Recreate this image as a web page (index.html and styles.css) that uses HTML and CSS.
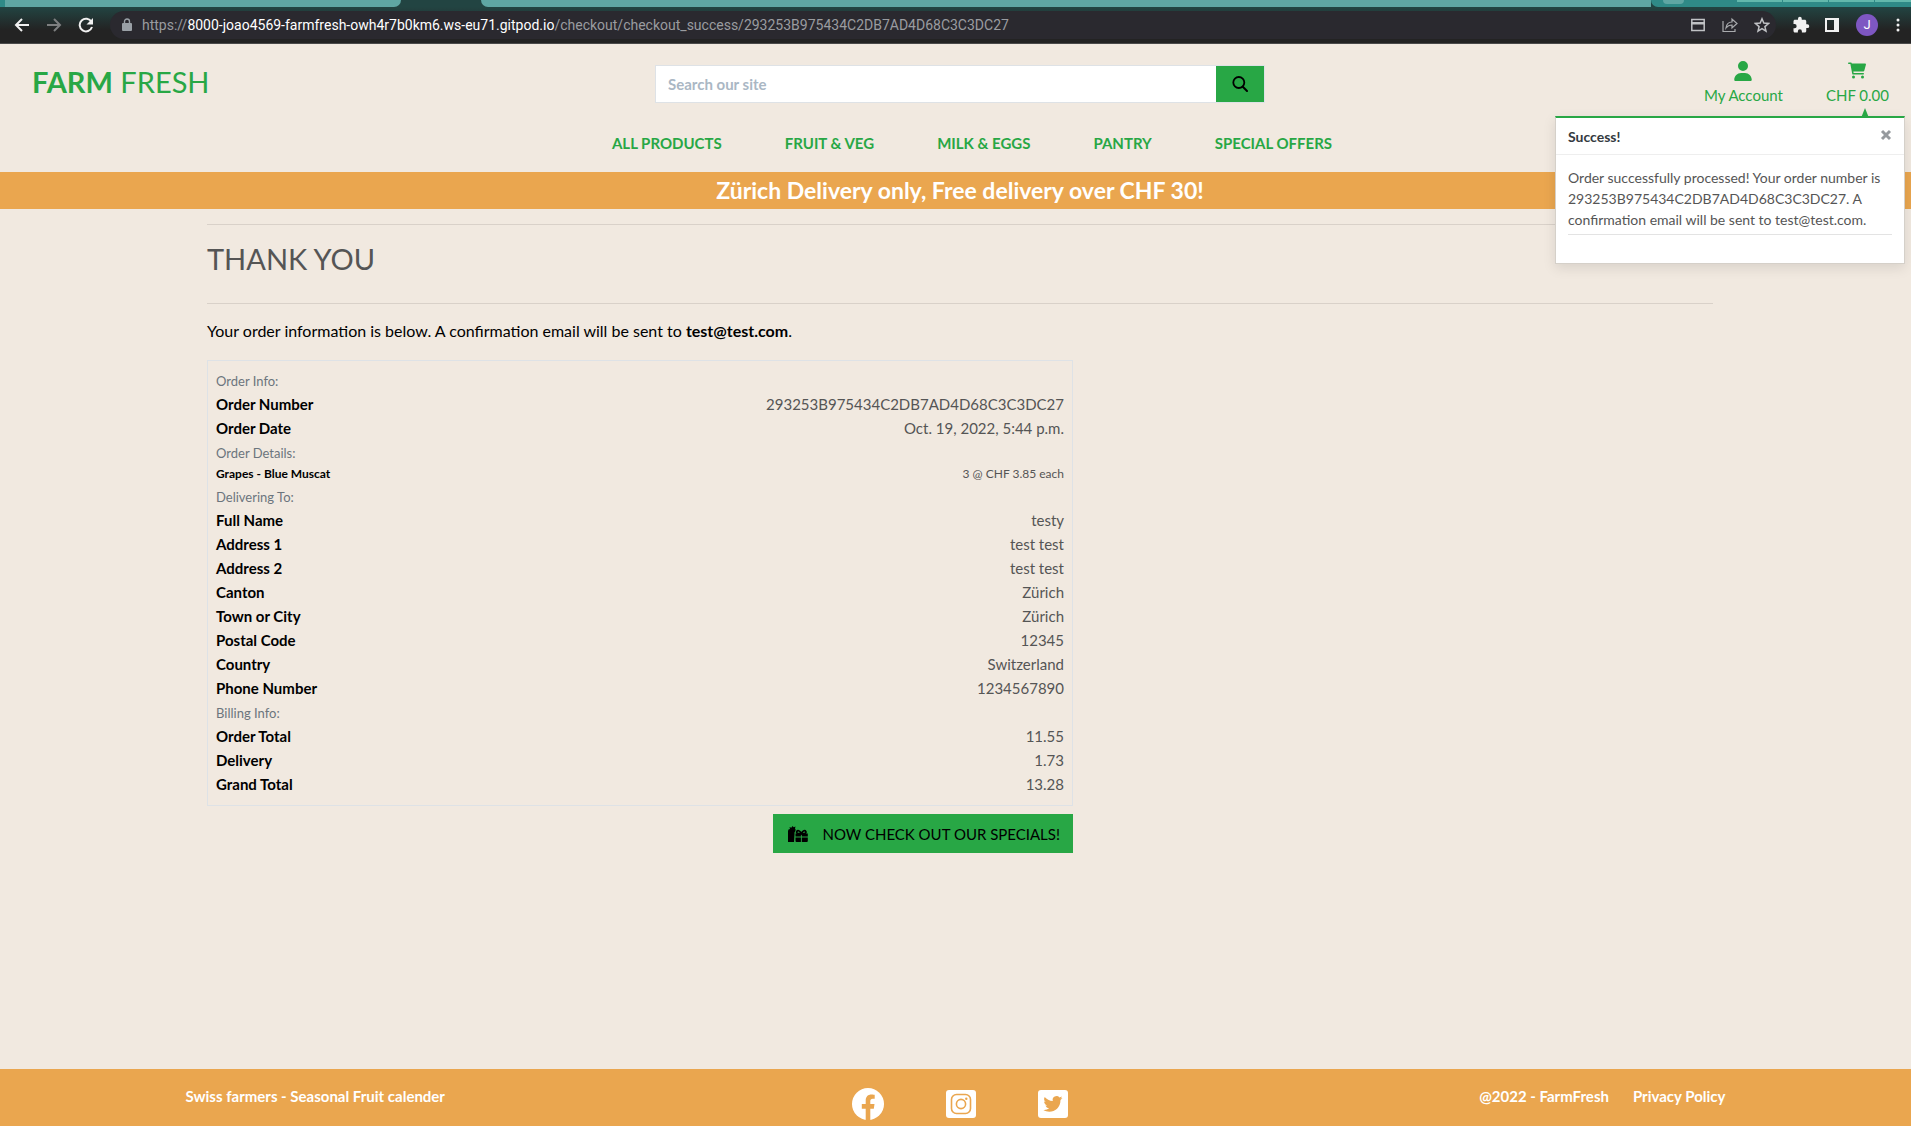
FILE: index.html
```html
<!DOCTYPE html>
<html lang="en">
<head>
<meta charset="utf-8">
<meta name="viewport" content="width=device-width, initial-scale=1">
<title>Farm Fresh</title>
<link rel="stylesheet" href="styles.css">
</head>
<body>
<div class="browser">
  <div class="tabs">
    <span class="tab tab-first"></span>
    <span class="tab-active"></span>
    <span class="tab tab-rest"></span>
    <span class="tab-theme"><i class="theme-dot"></i><i class="theme-grid"></i></span>
  </div>
  <div class="toolbar">
    <button class="tool" type="button" aria-label="Back"><svg viewBox="0 0 16 16" width="16" height="16"><path d="M15 8H2M8 2L2 8l6 6" fill="none" stroke="#f1f1f1" stroke-width="2"/></svg></button>
    <button class="tool" type="button" aria-label="Forward"><svg viewBox="0 0 16 16" width="16" height="16"><path d="M1 8h13M8 2l6 6-6 6" fill="none" stroke="#7d7f80" stroke-width="2"/></svg></button>
    <button class="tool" type="button" aria-label="Reload"><svg viewBox="0 0 16 16" width="16" height="16"><path d="M13.500 5A6.300 6.300 0 1 0 14 10" fill="none" stroke="#f1f1f1" stroke-width="2"/><path d="M15 1v6.500H8.500z" fill="#f1f1f1"/></svg></button>
    <div class="address">
      <svg class="lock" viewBox="0 0 10 14" width="10" height="14"><path d="M1 5h8q1 0 1 1v6q0 1-1 1H1q-1 0-1-1V6q0-1 1-1z" fill="#9aa0a6"/><path d="M2.500 6V3.500a2.500 2.500 0 0 1 5 0V6" fill="none" stroke="#9aa0a6" stroke-width="1.400"/></svg>
      <p class="url">https://<b>8000-joao4569-farmfresh-owh4r7b0km6.ws-eu71.gitpod.io</b>/checkout/checkout_success/293253B975434C2DB7AD4D68C3C3DC27</p>
      <div class="address-actions">
        <button class="tool" type="button" aria-label="Payment methods"><svg viewBox="0 0 16 16" width="16" height="16"><path d="M1.800 2.500h12.400v11H1.800z" fill="none" stroke="#c0c2c5" stroke-width="1.500"/><path d="M1 5h14v2.500H1z" fill="#c0c2c5"/></svg></button>
        <button class="tool" type="button" aria-label="Share"><svg viewBox="0 0 16 16" width="16" height="16"><path d="M1 4v10.500h12V12M4 11c.5-4 2.500-6 6-6V2l5 4.500L10 11V8C7.500 8 5.500 9 4 11z" fill="none" stroke="#a9abae" stroke-width="1.200"/></svg></button>
        <button class="tool" type="button" aria-label="Bookmark"><svg viewBox="0 0 16 16" width="16" height="16"><path d="M8 1.800l1.800 4.300 4.700.4-3.600 3.100 1.100 4.600L8 11.700l-4 2.500 1.100-4.600L1.500 6.500l4.700-.4z" fill="none" stroke="#c0c2c5" stroke-width="1.500"/></svg></button>
      </div>
    </div>
    <button class="tool" type="button" aria-label="Extensions"><svg viewBox="0 0 24 24" width="18" height="18"><path fill="#f1f1f1" d="M20.500 11H19V7c0-1.100-.9-2-2-2h-4V3.500a2.500 2.500 0 0 0-5 0V5H4c-1.100 0-2 .9-2 2v3.800h1.500a2.700 2.700 0 0 1 0 5.400H2V20c0 1.100.9 2 2 2h3.800v-1.500a2.700 2.700 0 0 1 5.400 0V22H17c1.100 0 2-.9 2-2v-4h1.500a2.500 2.500 0 0 0 0-5z"/></svg></button>
    <button class="tool" type="button" aria-label="Side panel"><svg viewBox="0 0 14 14" width="14" height="14"><path fill="#f1f1f1" fill-rule="evenodd" d="M0 0h14v14H0zM2 2v10h7V2z"/></svg></button>
    <button class="avatar" type="button">J</button>
    <button class="tool tool-menu" type="button" aria-label="Menu"><svg viewBox="0 0 4 16" width="4" height="16"><g fill="#f1f1f1"><circle cx="2" cy="3" r="1.500"/><circle cx="2" cy="8" r="1.500"/><circle cx="2" cy="13" r="1.500"/></g></svg></button>
  </div>
</div>

<header class="header">
  <div class="header-row">
    <a class="logo" href="#"><strong>FARM</strong> FRESH</a>
    <form class="search">
      <input class="search-input" type="text" placeholder="Search our site" aria-label="Search our site">
      <button class="search-button" type="button" aria-label="Search"><svg viewBox="0 0 16 16" width="16" height="16"><path d="M10.800 10.800L15 15" fill="none" stroke="#000" stroke-width="2" stroke-linecap="round"/><circle cx="6.800" cy="6.500" r="5.500" fill="none" stroke="#000" stroke-width="1.800"/></svg></button>
    </form>
    <div class="account">
      <a class="account-link" href="#"><svg viewBox="0 0 448 512" width="18" height="20"><path fill="currentColor" d="M224 256A128 128 0 1 0 224 0a128 128 0 0 0 0 256zm50 48H174C78 304 0 382 0 478c0 19 15 34 34 34h380c19 0 34-15 34-34 0-96-78-174-174-174z"/></svg><span>My Account</span></a>
      <a class="account-link" href="#"><svg viewBox="0 -32 576 544" width="18" height="18"><path fill="currentColor" d="M96 0c11 0 21 8 24 20l2 12h420c21 0 37 20 31 41l-53 192c-4 14-17 23-31 23H171l9 48h308a24 24 0 0 1 0 48H160c-11 0-21-8-24-20L76 48H24a24 24 0 0 1 0-48zM128 464a48 48 0 1 1 96 0 48 48 0 1 1-96 0zm384 0a48 48 0 1 1-96 0 48 48 0 1 1 96 0z"/></svg><span>CHF 0.00</span></a>
      <section class="toast" aria-label="Message">
        <div class="toast-head"><strong>Success!</strong><button class="toast-close" type="button" aria-label="Close"><svg viewBox="0 0 12 12" width="12" height="12"><path d="M2 2l8 8M10 2l-8 8" stroke="#969a9e" stroke-width="3"/></svg></button></div>
        <div class="toast-body"><p>Order successfully processed! Your order number is 293253B975434C2DB7AD4D68C3C3DC27. A confirmation email will be sent to test@test.com.</p></div>
      </section>
    </div>
  </div>
  <nav class="nav">
    <a href="#">ALL PRODUCTS</a><a href="#">FRUIT &amp; VEG</a><a href="#">MILK &amp; EGGS</a><a href="#">PANTRY</a><a href="#">SPECIAL OFFERS</a>
  </nav>
</header>
<div class="banner">Zürich Delivery only, Free delivery over CHF 30!</div>

<main class="main">
  <div class="container">
    <h1 class="title">THANK YOU</h1>
    <p class="intro">Your order information is below. A confirmation email will be sent to <strong>test@test.com</strong>.</p>
    <div class="order">
      <div class="order-box">
        <h2>Order Info:</h2>
        <dl>
          <div><dt>Order Number</dt><dd>293253B975434C2DB7AD4D68C3C3DC27</dd></div>
          <div><dt>Order Date</dt><dd>Oct. 19, 2022, 5:44 p.m.</dd></div>
        </dl>
        <h2>Order Details:</h2>
        <dl class="items">
          <div><dt>Grapes - Blue Muscat</dt><dd>3 @ CHF 3.85 each</dd></div>
        </dl>
        <h2>Delivering To:</h2>
        <dl>
          <div><dt>Full Name</dt><dd>testy</dd></div>
          <div><dt>Address 1</dt><dd>test test</dd></div>
          <div><dt>Address 2</dt><dd>test test</dd></div>
          <div><dt>Canton</dt><dd>Zürich</dd></div>
          <div><dt>Town or City</dt><dd>Zürich</dd></div>
          <div><dt>Postal Code</dt><dd>12345</dd></div>
          <div><dt>Country</dt><dd>Switzerland</dd></div>
          <div><dt>Phone Number</dt><dd>1234567890</dd></div>
        </dl>
        <h2>Billing Info:</h2>
        <dl>
          <div><dt>Order Total</dt><dd>11.55</dd></div>
          <div><dt>Delivery</dt><dd>1.73</dd></div>
          <div><dt>Grand Total</dt><dd>13.28</dd></div>
        </dl>
      </div>
      <a class="specials" href="#"><svg viewBox="0 0 20 16" width="20" height="16"><path d="M0 16V5q0-2 2-2L1.500 1l1.800.8L4.500 0l1.200 1.200L7.500.5 7 2.600q1 .9.400 2.400Q6 6.500 6.500 8L6 16z"/><path d="M7.500 7.500h12.300v3h-6v-2h-.9v2H7.500zM7.500 11.600h5.400V16H8.500q-1 0-1-1zM13.800 11.600h6V15q0 1-1 1h-5z"/><path d="M13.300 7.500C9.500 8 8 7 8.800 5.500s2.800-1.200 4.500 2c1.700-3.200 3.700-3.500 4.500-2s-.7 2.500-4.500 2z" fill="none" stroke="#000" stroke-width="1.600"/></svg><span>NOW CHECK OUT OUR SPECIALS!</span></a>
    </div>
  </div>
</main>

<footer class="footer">
  <div class="footer-row">
    <a href="#">Swiss farmers - Seasonal Fruit calender</a>
    <div class="social">
      <a href="#" aria-label="Facebook"><svg viewBox="0 0 32 32" width="32" height="32"><circle cx="16" cy="16" r="16" fill="#fff"/><path fill="#eaa64f" d="M13.700 32V20.700H9.800V16h3.900v-3.500C13.700 8.600 16 6.500 19.500 6.500c1.700 0 3.200.3 3.200.3v3.900h-1.900c-2 0-2.500 1.200-2.500 2.400V16h4.200l-.7 4.700h-3.500V32z"/></svg></a>
      <a href="#" aria-label="Instagram"><svg viewBox="0 0 30 28" width="30" height="28"><rect width="30" height="28" rx="3" fill="#fff"/><g fill="none" stroke="#eaa64f" stroke-width="1.600"><rect x="5.500" y="4.500" width="19" height="19" rx="5"/><circle cx="15" cy="14" r="4.600"/></g><circle cx="20.300" cy="8.800" r="1.200" fill="#eaa64f"/></svg></a>
      <a href="#" aria-label="Twitter"><svg viewBox="0 0 30 28" width="30" height="28"><rect width="30" height="28" rx="3" fill="#fff"/><path fill="#eaa64f" d="M24.500 8c-.7.300-1.500.500-2.200.600.8-.5 1.400-1.200 1.700-2.100-.8.400-1.600.8-2.500.9a3.900 3.900 0 0 0-6.700 3.600c-3.300-.2-6.200-1.700-8.100-4.100-1.200 2.100-.5 4.200 1.200 5.200-.6 0-1.200-.2-1.800-.5 0 1.900 1.400 3.500 3.200 3.900-.6.200-1.200.2-1.800.1.500 1.500 1.900 2.700 3.700 2.700A8 8 0 0 1 5.400 20c6.900 4.300 17.100.2 17.100-10z"/></svg></a>
    </div>
    <div class="legal"><span>@2022 - FarmFresh</span><a href="#">Privacy Policy</a></div>
  </div>
</footer>
</body>
</html>
```

FILE: styles.css
```css
* { box-sizing: border-box; }

:root {
  --green: #28a745;
  --orange: #eaa64f;
  --cream: #f1e9e0;
  --grey: #555;
}

body {
  margin: 0;
  min-height: 100vh;
  display: flex;
  flex-direction: column;
  background: var(--cream);
  color: #000;
  font: 15px/24px Lato, "Open Sans", sans-serif;
}

h1, h2, p, dl, dd { margin: 0; }
a { color: inherit; text-decoration: none; }
svg { display: block; flex: none; }
button { padding: 0; border: 0; background: none; font: inherit; cursor: pointer; }

/* Browser bar */
.browser { height: 44px; background: linear-gradient(#224442 7px, #232323 30px); border-bottom: 1px solid #4a4a4a; }
.tabs { display: flex; height: 7px; overflow: hidden; }
.tab { background: #5fa6a3; }
.tab-first { width: 401px; border-left: 5px solid #2f8a87; border-radius: 0 0 7px 0; }
.tab-active { width: 80px; }
.tab-rest { flex: 1; border-radius: 0 0 0 7px; }
.tab-theme { display: flex; gap: 53px; width: 260px; padding-left: 12px; background: #2f8a87; border-radius: 0 0 0 7px; }
.theme-dot { width: 21px; height: 4px; background: #5fa6a3; border-radius: 0 0 10px 10px; }
.theme-grid { flex: 1; height: 2px; background: repeating-linear-gradient(90deg, #63b8ac 0 45px, #2f8a87 45px 46px); }
.toolbar { display: flex; align-items: center; gap: 16px; height: 36px; padding: 0 11px 0 14px; }
.tool { display: grid; place-items: center; width: 16px; height: 24px; }
.tool-menu { width: 4px; margin-left: 2px; }
.avatar { width: 22px; height: 22px; border-radius: 50%; background: #7e57c2; color: #fff; font: 13px/22px Roboto, sans-serif; }
.address { flex: 1; display: flex; align-items: center; gap: 10px; height: 28px; padding: 0 6px 0 12px; border-radius: 14px; background: #2a292f; }
.url { flex: 1; color: #9a9ca0; font: 14px/20px Roboto, "Open Sans", sans-serif; white-space: nowrap; }
.url b { color: #fff; font-weight: 400; }
.address-actions { display: flex; gap: 16px; }

/* Header */
.header { padding-left: 9px; }
.header-row { display: grid; grid-template-columns: repeat(3, 1fr); height: 78px; }
.logo { justify-self: start; padding: 19px 23px; color: var(--green); font-size: 29px; line-height: 38px; }
.search { display: flex; align-self: start; height: 38px; margin: 21px 12px 0; border: 1px solid #dee2e6; background: #fff; }
.search-input { flex: 1; min-width: 0; padding: 0 12px; border: 0; background: none; font: inherit; font-weight: 700; }
.search-input::placeholder { color: #aab7c4; opacity: 1; }
.search-button { display: grid; place-items: center; width: 48px; background: var(--green); }
.account { position: relative; display: flex; justify-content: flex-end; gap: 43px; padding: 17px 22px 0 0; color: var(--green); }
.account-link { display: flex; flex-direction: column; align-items: center; justify-content: space-between; height: 46px; }
.nav { display: flex; justify-content: center; gap: 63px; padding: 9px 0 17px 24px; color: var(--green); font-weight: 700; }
.banner { padding: 4px 0 5px 9px; background: var(--orange); color: #fff; font-size: 23px; font-weight: 700; line-height: 28px; text-align: center; }

/* Order message under the basket */
.toast { position: absolute; top: 72px; right: 6px; z-index: 1; width: 350px; border: 1px solid #d5d0c9; border-top: 2px solid var(--green); background: #fff; color: var(--grey); font-size: 14px; line-height: 21px; box-shadow: 0 4px 12px rgba(0, 0, 0, .1); }
.toast::before { content: ""; position: absolute; right: 35px; bottom: 100%; border: 5px solid transparent; border-width: 0 4px 10px; border-bottom-color: var(--green); }
.toast-head { display: flex; justify-content: space-between; align-items: flex-start; height: 37px; padding: 8px 12px; border-bottom: 1px solid #eee; color: #343a40; }
.toast-close { padding-top: 3px; }
.toast-body { padding: 12px 12px 28px; }
.toast-body p { padding-bottom: 4px; border-bottom: 1px solid #e3e3e3; }

/* Order summary */
.main { flex: 1; padding: 15px 0 0 9px; }
.container { max-width: 1506px; margin: 0 auto; }
.title { height: 80px; padding-top: 14px; border: solid #d9d1c9; border-width: 1px 0; color: var(--grey); font-size: 29px; font-weight: 400; line-height: 40px; }
.intro { padding: 15px 0 17px; font-size: 16px; }
.order { display: flex; flex-direction: column; width: calc((100% + 30px) * 7 / 12 - 30px); gap: 8px; }
.order-box { padding: 7px 8px 9px; border: 1px solid #dee2e6; }
.order-box h2 { padding-top: 2px; color: #6c757d; font-size: 13px; font-weight: 400; line-height: 22px; }
.order-box dl > div { display: flex; justify-content: space-between; }
.order-box dt { font-weight: 700; }
.order-box dd { color: var(--grey); }
.order-box .items { font-size: 12px; line-height: 20px; }
.specials { display: flex; align-items: center; align-self: flex-end; gap: 14px; height: 39px; padding: 0 13px 0 15px; background: var(--green); }

/* Footer */
.footer { padding: 15px 0 6px; background: var(--orange); color: #fff; font-weight: 700; }
.footer-row { display: grid; grid-template-columns: 1fr auto 1fr; max-width: 1540px; margin: 0 auto; }
.social { display: flex; align-items: center; gap: 62px; height: 36px; padding: 4px 0 0 9px; }
.legal { display: flex; justify-content: flex-end; gap: 24px; }
```
